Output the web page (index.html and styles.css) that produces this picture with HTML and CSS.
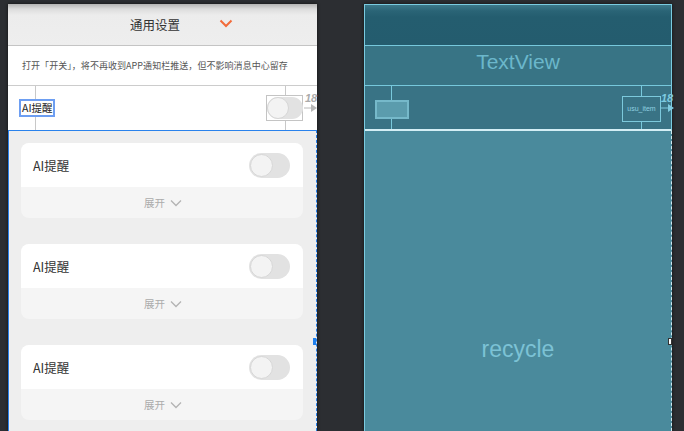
FILE: index.html
```html
<!DOCTYPE html>
<html lang="zh">
<head>
<meta charset="utf-8">
<title>Layout preview</title>
<link rel="stylesheet" href="styles.css">
</head>
<body>
<div class="design">
  <div class="hdr">
    <span class="title">通用设置</span>
    <svg class="hdr-chev" width="14" height="9" viewBox="0 0 14 9"><polyline points="1.5,1.5 7,7 12.5,1.5" fill="none" stroke="#f26b3a" stroke-width="2"/></svg>
  </div>
  <div class="notice">打开「开关」，将不再收到APP通知栏推送，但不影响消息中心留存</div>
  <div class="airow">
    <span class="guide guide-l"></span>
    <span class="guide guide-r"></span>
    <span class="selbox">AI提醒</span>
    <span class="swbox"><span class="sw sw-small"><span class="knob"></span></span></span>
    <span class="dim dim-grey">18</span>
    <svg class="dim-arrow" width="16" height="10" viewBox="0 0 16 10"><line x1="0" y1="5" x2="8" y2="5" stroke="#b8b8b8" stroke-width="1"/><polygon points="7,1 13,5 7,9" fill="#b8b8b8"/></svg>
  </div>
  <div class="list">
    <div class="card">
      <div class="card-top"><span class="card-label">AI提醒</span><span class="sw"><span class="knob"></span></span></div>
      <div class="card-bottom"><span>展开</span><svg width="12" height="8" viewBox="0 0 12 8"><polyline points="1,1.5 6,6.5 11,1.5" fill="none" stroke="#b3b3b3" stroke-width="1.3"/></svg></div>
    </div>
    <div class="card">
      <div class="card-top"><span class="card-label">AI提醒</span><span class="sw"><span class="knob"></span></span></div>
      <div class="card-bottom"><span>展开</span><svg width="12" height="8" viewBox="0 0 12 8"><polyline points="1,1.5 6,6.5 11,1.5" fill="none" stroke="#b3b3b3" stroke-width="1.3"/></svg></div>
    </div>
    <div class="card">
      <div class="card-top"><span class="card-label">AI提醒</span><span class="sw"><span class="knob"></span></span></div>
      <div class="card-bottom"><span>展开</span><svg width="12" height="8" viewBox="0 0 12 8"><polyline points="1,1.5 6,6.5 11,1.5" fill="none" stroke="#b3b3b3" stroke-width="1.3"/></svg></div>
    </div>
    <span class="handle handle-blue"></span>
  </div>
</div>

<div class="blueprint">
  <div class="bp-status"></div>
  <div class="bp-text">TextView</div>
  <div class="bp-row">
    <span class="bp-guide bp-guide-l"></span>
    <span class="bp-guide bp-guide-r"></span>
    <span class="bp-rect"></span>
    <span class="bp-item">usu_item</span>
    <span class="dim dim-cyan">18</span>
    <svg class="dim-arrow" width="16" height="10" viewBox="0 0 16 10"><line x1="0" y1="5" x2="8" y2="5" stroke="#7fcbe0" stroke-width="1"/><polygon points="7,1 13,5 7,9" fill="#7fcbe0"/></svg>
  </div>
  <div class="bp-recycle">
    <span class="bp-recycle-label">recycle</span>
    <span class="handle handle-white"></span>
  </div>
</div>
</body>
</html>
```

FILE: styles.css
```css
* { box-sizing: border-box; }

html, body {
  margin: 0;
  height: 431px;
  overflow: hidden;
}

body {
  background: #2c2e32;
  display: flex;
  align-items: flex-start;
  gap: 47px;
  padding: 4px 0 0 8px;
  font-family: "Noto Sans CJK SC", "Noto Sans", sans-serif;
}

/* ---------- design view ---------- */
.design {
  width: 309px;
  height: 427px;
  background: #eeeeee;
  display: flex;
  flex-direction: column;
  box-shadow: 0 0 3px #111;
}

.hdr {
  height: 42px;
  flex: none;
  border-bottom: 1px solid #c4c4c4;
  background: linear-gradient(#b4b4b4 0, #dcdcdc 5px, #ececec 11px, #eeeeee 100%);
  display: flex;
  align-items: center;
  padding-left: 122px;
  gap: 39px;
}

.title {
  font-size: 12.5px;
  color: #333;
  line-height: 16px;
}

.hdr-chev { margin-top: -3px; }

.notice {
  height: 40px;
  flex: none;
  background: #fff;
  border-bottom: 1px solid #cccccc;
  display: flex;
  align-items: center;
  padding-left: 14px;
  font-size: 9px;
  letter-spacing: 0.05px;
  color: #555;
  white-space: nowrap;
}

.airow {
  height: 44px;
  flex: none;
  background: #fff;
  position: relative;
  display: flex;
  align-items: center;
  justify-content: space-between;
  padding: 0 14px 0 11px;
}

.guide {
  position: absolute;
  top: 0;
  bottom: 0;
  width: 1px;
  background: #c8c8c8;
}
.guide-l { left: 27px; }
.guide-r { left: 277px; }

.selbox {
  position: relative;
  z-index: 1;
  background: #fff;
  border: 2px solid #6d9ef2;
  font-size: 10.5px;
  line-height: 14px;
  color: #222;
  padding: 0 1px;
}

.swbox {
  position: relative;
  z-index: 1;
  width: 37px;
  height: 26px;
  background: #fff;
  border: 1px solid #c4c4c4;
  display: flex;
  align-items: center;
}

.sw {
  width: 41px;
  height: 25px;
  border-radius: 13px;
  background: #e2e2e2;
  position: relative;
  flex: none;
}
.knob {
  position: absolute;
  left: 1px;
  top: 1px;
  width: 23px;
  height: 23px;
  border-radius: 50%;
  background: #f3f3f3;
  border: 1px solid #d6d6d6;
}
.sw-small {
  width: 36px;
  height: 22px;
}
.sw-small .knob {
  left: 0;
  top: 0;
  width: 22px;
  height: 22px;
}

.dim {
  position: absolute;
  top: 6px;
  font-size: 11px;
  font-weight: bold;
  font-style: italic;
  font-family: "Liberation Sans", Arial, sans-serif;
  line-height: 12px;
}
.dim-grey { left: 297px; color: #ababab; }
.dim-cyan { left: 296px; color: #7fcbe0; }

.dim-arrow {
  position: absolute;
  top: 17px;
  left: 296px;
}

.list {
  flex: 1;
  position: relative;
  overflow: hidden;
  border-top: 1px solid #2a82ec;
  border-left: 1px solid #2a82ec;
  border-right: 1px dashed #2a82ec;
  padding: 12px 13px 0 12px;
  display: flex;
  flex-direction: column;
  gap: 26px;
}

.card {
  height: 75px;
  flex: none;
  border-radius: 8px;
  overflow: hidden;
  background: #f5f5f5;
  display: flex;
  flex-direction: column;
}

.card-top {
  height: 44px;
  background: #fff;
  display: flex;
  align-items: center;
  justify-content: space-between;
  padding: 0 13px 0 12px;
}

.card-label {
  font-size: 12.5px;
  color: #333;
}

.card-bottom {
  flex: 1;
  display: flex;
  align-items: center;
  justify-content: center;
  gap: 5px;
  font-size: 10.5px;
  color: #ababab;
  padding-left: 2px;
}

.handle {
  position: absolute;
  width: 4px;
  height: 7px;
  top: 207px;
  right: -1px;
}
.handle-blue { background: #1e80ee; }
.handle-white { background: #ffffff; border: 1px solid #333; }

/* ---------- blueprint view ---------- */
.blueprint {
  width: 308px;
  height: 427px;
  border-left: 1px solid #7acbe0;
  border-top: 1px solid #7acbe0;
  display: flex;
  flex-direction: column;
  background: #4a8a9c;
  box-shadow: 0 0 3px #111;
}

.bp-status {
  height: 41px;
  flex: none;
  background: linear-gradient(#3d798a 0, #2a6476 6px, #245d6f 12px, #245c6e 100%);
  border-bottom: 1px solid #76c8dc;
  border-right: 1px solid #7acbe0;
}

.bp-text {
  height: 40px;
  flex: none;
  background: #387485;
  border-bottom: 1px solid #76c8dc;
  border-right: 1px solid #7acbe0;
  display: flex;
  align-items: center;
  justify-content: center;
  padding-bottom: 7px;
  font-family: "Liberation Sans", Arial, sans-serif;
  font-size: 21px;
  color: #6bb7cb;
}

.bp-row {
  height: 45px;
  flex: none;
  position: relative;
  background: #397385;
  border-bottom: 2px solid #d3eef5;
  border-right: 1px solid #7acbe0;
  display: flex;
  align-items: center;
  justify-content: space-between;
  padding: 3px 10px 0 10px;
}

.bp-guide {
  position: absolute;
  top: 0;
  bottom: 0;
  width: 1px;
  background: #79c9dc;
}
.bp-guide-l { left: 26px; }
.bp-guide-r { left: 276px; }

.bp-rect {
  position: relative;
  z-index: 1;
  width: 34px;
  height: 19px;
  background: #5b9cad;
  border: 2px solid #76b9ca;
}

.bp-item {
  position: relative;
  z-index: 1;
  width: 39px;
  height: 26px;
  background: #397385;
  border: 1px solid #7cc9dc;
  display: flex;
  align-items: center;
  justify-content: center;
  font-family: "Liberation Sans", Arial, sans-serif;
  font-size: 7px;
  color: #8fd0e0;
  margin-top: -1px;
}

.bp-recycle {
  flex: 1;
  position: relative;
  border-right: 1px dashed #cfe9f0;
  display: flex;
  justify-content: center;
  padding-top: 204px;
}

.bp-recycle-label {
  font-family: "Liberation Sans", Arial, sans-serif;
  font-size: 23px;
  line-height: 28px;
  color: #7cc2d5;
  height: 28px;
}
```
